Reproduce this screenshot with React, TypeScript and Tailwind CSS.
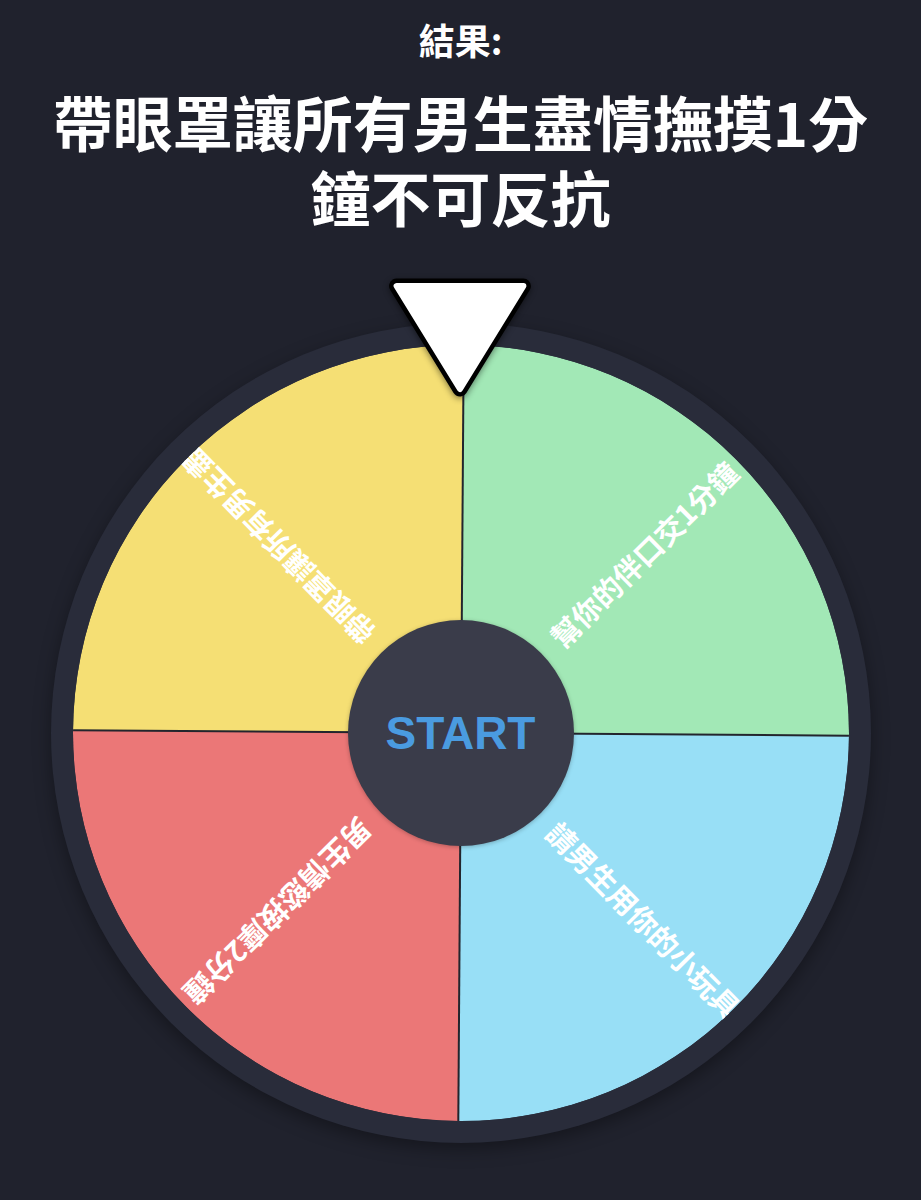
import React from "react";

const C = 388;
const R = 388;

const segments = [
  { d: `M ${C} ${C} L ${C} 0 A ${R} ${R} 0 0 1 ${2 * C} ${C} Z`, fill: "#a2e8b6", angle: -45, label: "幫你的伴口交1分鐘" },
  { d: `M ${C} ${C} L ${2 * C} ${C} A ${R} ${R} 0 0 1 ${C} ${2 * C} Z`, fill: "#98dff6", angle: 45, label: "請男生用你的小玩具" },
  { d: `M ${C} ${C} L ${C} ${2 * C} A ${R} ${R} 0 0 1 0 ${C} Z`, fill: "#eb7777", angle: 135, label: "男生情慾按摩2分鐘" },
  { d: `M ${C} ${C} L 0 ${C} A ${R} ${R} 0 0 1 ${C} 0 Z`, fill: "#f5df74", angle: -135, label: "帶眼罩讓所有男生盡情撫摸1分鐘不可反抗" },
];

function Wheel() {
  return (
    <svg width={776} height={776} viewBox="0 0 776 776" className="block">
      <defs>
        <clipPath id="wheelClip">
          <circle cx={C} cy={C} r={R} />
        </clipPath>
      </defs>
      <g clipPath="url(#wheelClip)">
        <g transform={`rotate(0.4 ${C} ${C})`}>
          {segments.map((s, i) => (
            <path key={i} d={s.d} fill={s.fill} />
          ))}
          <line x1={C} y1={-10} x2={C} y2={786} stroke="#23252d" strokeWidth={2} />
          <line x1={-10} y1={C} x2={786} y2={C} stroke="#23252d" strokeWidth={2} />
          {segments.map((s, i) => (
            <text
              key={`t${i}`}
              x={C + 131}
              y={C}
              transform={`rotate(${s.angle} ${C} ${C})`}
              fill="#ffffff"
              fontSize={29}
              fontWeight={600}
              dominantBaseline="central"
              style={{ fontFamily: '"Noto Sans CJK TC", "Noto Sans", sans-serif' }}
            >
              {s.label}
            </text>
          ))}
        </g>
      </g>
    </svg>
  );
}

function Pointer() {
  const pts = "16.6,14 143.4,14 80,117";
  return (
    <svg width={160} height={132} viewBox="0 0 160 132" className="block drop-shadow-[0_2px_3px_rgba(0,0,0,0.45)]">
      <polygon points={pts} fill="#000" stroke="#000" strokeWidth={15} strokeLinejoin="round" />
      <polygon points={pts} fill="#fff" stroke="#fff" strokeWidth={6} strokeLinejoin="round" />
    </svg>
  );
}

export default function App() {
  return (
    <div
      className="min-h-[1200px] w-full bg-[#20222d] text-white overflow-hidden"
      style={{ fontFamily: '"Noto Sans CJK TC", "Noto Sans", sans-serif' }}
    >
      <div className="pt-[17px] text-center text-[36px] leading-[44px] font-bold">結果:</div>
      <div className="mt-[22px] px-[30px] text-center text-[60px] leading-[75px] font-bold">
        帶眼罩讓所有男生盡情撫摸1分鐘不可反抗
      </div>
      <div className="mt-[90px] flex justify-center">
        <div className="relative w-[820px] h-[820px] rounded-full bg-[#292c3a] p-[22px] shadow-[0_6px_18px_rgba(0,0,0,0.35)]">
          <Wheel />
          <div className="absolute left-[297px] top-[297px] w-[226px] h-[226px] rounded-full bg-[#3a3c4a] flex items-center justify-center shadow-[0_1px_4px_rgba(0,0,0,0.25)]">
            <span
              className="text-[46px] font-bold text-[#4a9be0] leading-none"
              style={{ fontFamily: '"Liberation Sans", Arial, sans-serif' }}
            >
              START
            </span>
          </div>
          <div className="absolute left-[329.5px] top-[-51px]">
            <Pointer />
          </div>
        </div>
      </div>
    </div>
  );
}
